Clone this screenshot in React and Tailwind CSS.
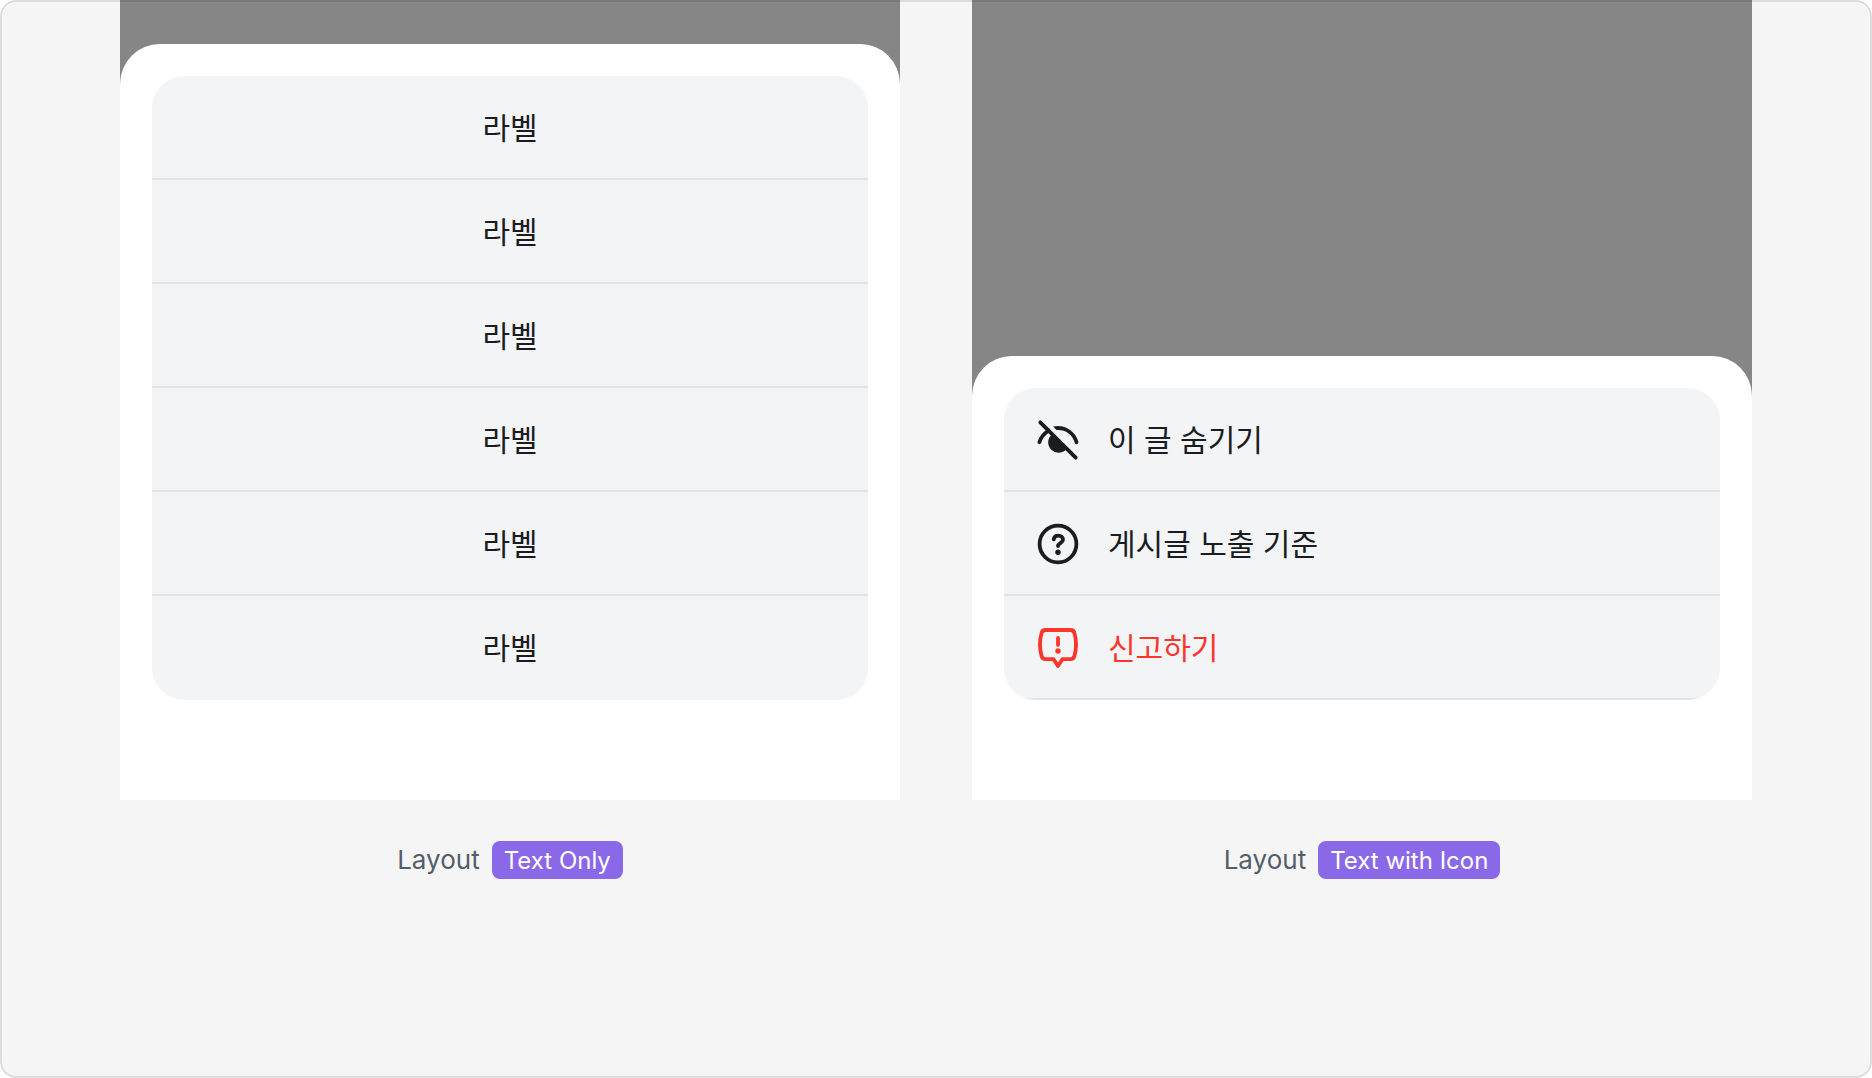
import React from 'react';
import clsx from 'clsx';

const EyeSlashIcon = () => (
  <svg viewBox="0 0 44 44" className="size-11 shrink-0" fill="none" aria-hidden="true">
    <path d="M4.3 4.3L39.7 39.7" stroke="currentColor" strokeWidth="3.8" strokeLinecap="round" />
    <path d="M3.4 24.2C4.9 19.4 8.2 15.2 12.6 12.6" stroke="currentColor" strokeWidth="3.8" strokeLinecap="round" />
    <path
      d="M17.2 8.6C28 6.2 39 12.4 42.3 23.6C43 26.2 39.7 27.2 38.9 24.9C36 15.6 28.8 11.3 20.4 12Z"
      fill="currentColor"
    />
    <path d="M16.2 16.2A10.4 10.4 0 1 0 30.8 30.8Z" fill="currentColor" />
  </svg>
);

const QuestionIcon = () => (
  <svg viewBox="0 0 44 44" className="size-11 shrink-0" fill="none" aria-hidden="true">
    <circle cx="22" cy="22" r="18.4" stroke="currentColor" strokeWidth="3.8" />
    <path
      d="M17.7 17.4C18.1 15 19.9 13.6 22.3 13.6C25 13.6 27 15.3 27 17.7C27 21 22.2 21 22 24"
      stroke="currentColor"
      strokeWidth="3.8"
      strokeLinecap="round"
    />
    <circle cx="22" cy="30.3" r="2.7" fill="currentColor" />
  </svg>
);

const ReportIcon = () => (
  <svg viewBox="0 0 44 44" className="size-11 shrink-0" fill="none" aria-hidden="true">
    <path
      d="M9.5 4H34.5C36.8 4 37.9 5 38.4 7C40.4 14 40.4 23 38.4 30C37.8 32.2 36.8 33.2 34.5 33.2H26.4L22 40L17.6 33.2H9.5C7.2 33.2 6.2 32.2 5.6 30C3.6 23 3.6 14 5.6 7C6.1 5 7.2 4 9.5 4Z"
      stroke="currentColor"
      strokeWidth="3.8"
      strokeLinejoin="round"
    />
    <path d="M22 11.9V18.9" stroke="currentColor" strokeWidth="3.8" strokeLinecap="round" />
    <circle cx="22" cy="25" r="2.7" fill="currentColor" />
  </svg>
);

const labelItems = Array.from({ length: 6 }, (_, i) => ({ id: i, label: '라벨' }));

const iconItems = [
  { id: 'hide', label: '이 글 숨기기', Icon: EyeSlashIcon },
  { id: 'criteria', label: '게시글 노출 기준', Icon: QuestionIcon },
  { id: 'report', label: '신고하기', Icon: ReportIcon, critical: true },
];

const ActionItem = ({ label, Icon, critical, divider }) => (
  <li>
    <button
      type="button"
      className={clsx(
        'flex h-26 w-full items-center px-8 text-[30px] leading-10',
        Icon ? 'justify-start gap-7' : 'justify-center',
        critical ? 'text-[#fc352d]' : 'text-[#1a1c20]',
        divider && 'shadow-[inset_0_-2px_0_#e3e4e6]'
      )}
    >
      {Icon && <Icon />}
      <span>{label}</span>
    </button>
  </li>
);

const ActionSheet = ({ items, lastDivider }) => (
  <div className="w-full rounded-t-[40px] bg-white px-8 pt-8 pb-25">
    <ul className="overflow-hidden rounded-[32px] bg-[#f3f4f6]">
      {items.map((item, i) => (
        <ActionItem key={item.id} {...item} divider={lastDivider || i < items.length - 1} />
      ))}
    </ul>
  </div>
);

const Example = ({ variant, children }) => (
  <figure className="flex min-w-0 flex-1 flex-col">
    <div className="flex min-h-[800px] items-end bg-[#868686]">{children}</div>
    <figcaption className="flex items-center justify-center gap-3 pt-10 text-[#545d69]">
      <span className="text-[26px] leading-10">Layout</span>
      <span className="rounded-lg bg-[#8a69e8] px-3 pt-0.5 text-2xl leading-9 text-white">{variant}</span>
    </figcaption>
  </figure>
);

const App = () => {
  return (
    <div className="min-h-screen bg-white font-['Inter','Noto_Sans_CJK_KR',sans-serif]">
      <main className="relative flex min-h-screen gap-18 overflow-hidden rounded-2xl bg-[#f5f5f5] px-30">
        <Example variant="Text Only">
          <ActionSheet items={labelItems} />
        </Example>
        <Example variant="Text with Icon">
          <ActionSheet items={iconItems} lastDivider />
        </Example>
        {/* Frame outline, drawn over the dimmed areas too */}
        <div className="pointer-events-none absolute inset-0 rounded-2xl border-2 border-black/10" />
      </main>
    </div>
  );
};

export default App;
